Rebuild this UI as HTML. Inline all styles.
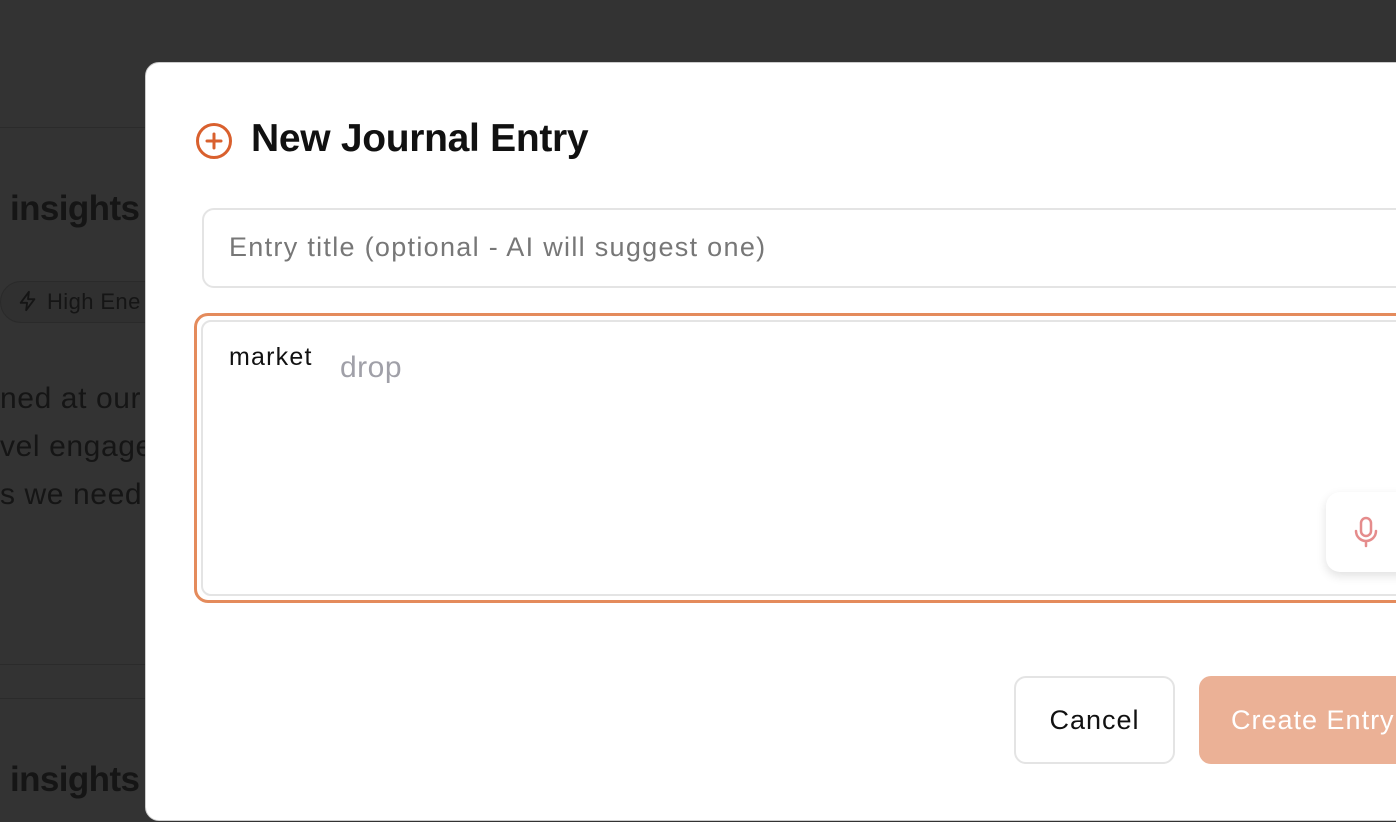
<!DOCTYPE html>
<html><head><style>
*{margin:0;padding:0;box-sizing:border-box}
html,body{width:1396px;height:822px;overflow:hidden}
body{background:#333;font-family:"Liberation Sans",sans-serif;position:relative}
.bg{position:absolute;color:#151515}
.line{position:absolute;left:0;width:150px;height:1px;background:#2b2b2b}
.modal{position:absolute;left:145px;top:62px;width:1300px;height:759px;background:#fff;border-radius:14px;border:1px solid #ccc}
</style></head><body>
<div class="line" style="top:127px"></div>
<div class="line" style="top:664px"></div>
<div class="line" style="top:698px"></div>
<div class="bg" style="left:10px;top:189px;font-size:35px;font-weight:bold;letter-spacing:-0.6px">insights</div>
<div class="bg" style="left:10px;top:760px;font-size:35px;font-weight:bold;letter-spacing:-0.6px">insights</div>
<div class="bg" style="left:0;top:281px;width:170px;height:42px;border:1px solid #2a2a2a;border-radius:21px;background:#303030"></div>
<svg class="bg" style="left:17px;top:290px" width="22" height="22" viewBox="0 0 24 24" fill="none" stroke="#151515" stroke-width="2" stroke-linejoin="round"><path d="M13 2L4 14h7l-1 8 9-12h-7z"/></svg>
<div class="bg" style="left:47px;top:289px;font-size:22px;letter-spacing:0.4px">High Ene</div>
<div class="bg" style="left:0;top:375px;font-size:30px;line-height:48px;letter-spacing:0.6px">ned at our<br>vel engage<br>s we need</div>

<div class="modal"></div>
<svg style="position:absolute;left:195px;top:122px" width="38" height="38" viewBox="0 0 38 38" fill="none" stroke="#d9602e" stroke-width="3" stroke-linecap="round"><circle cx="19" cy="19" r="16.5"/><path d="M19 12v14M12 19h14"/></svg>
<div style="position:absolute;left:251px;top:117px;font-size:39px;font-weight:bold;color:#111;letter-spacing:-0.3px">New Journal Entry</div>
<div style="position:absolute;left:202px;top:208px;width:1250px;height:80px;border:2px solid #e4e4e4;border-radius:12px"></div>
<div style="position:absolute;left:229px;top:232px;font-size:27px;color:#777;letter-spacing:1.3px">Entry title (optional - AI will suggest one)</div>
<div style="position:absolute;left:194px;top:313px;width:1260px;height:290px;border:3px solid #e48b5c;border-radius:14px"></div>
<div style="position:absolute;left:201px;top:320px;width:1250px;height:276px;border:2px solid #e4e4e4;border-radius:10px"></div>
<div style="position:absolute;left:229px;top:343px;font-size:25px;color:#111;letter-spacing:1.2px">market</div>
<div style="position:absolute;left:340px;top:351px;font-size:30px;color:#a0a0a8;letter-spacing:0.5px">drop</div>
<div style="position:absolute;left:1326px;top:492px;width:100px;height:80px;background:#fff;border-radius:14px;box-shadow:0 4px 10px rgba(0,0,0,0.12)"></div>
<svg style="position:absolute;left:1353px;top:515px" width="26" height="34" viewBox="0 0 26 34" fill="none" stroke="#e58c8c" stroke-width="2.5" stroke-linecap="round"><rect x="8" y="3" width="10" height="18" rx="5"/><path d="M3 16a10 10 0 0 0 20 0M13 26v5"/></svg>
<div style="position:absolute;left:1014px;top:676px;width:161px;height:88px;border:2px solid #e4e4e4;border-radius:12px;font-size:27px;color:#111;text-align:center;line-height:84px;letter-spacing:1px">Cancel</div>
<div style="position:absolute;left:1199px;top:676px;width:260px;height:88px;background:#ebb196;border-radius:12px;font-size:27px;color:#fff;line-height:88px;padding-left:32px;letter-spacing:1px">Create Entry</div>
</body></html>
